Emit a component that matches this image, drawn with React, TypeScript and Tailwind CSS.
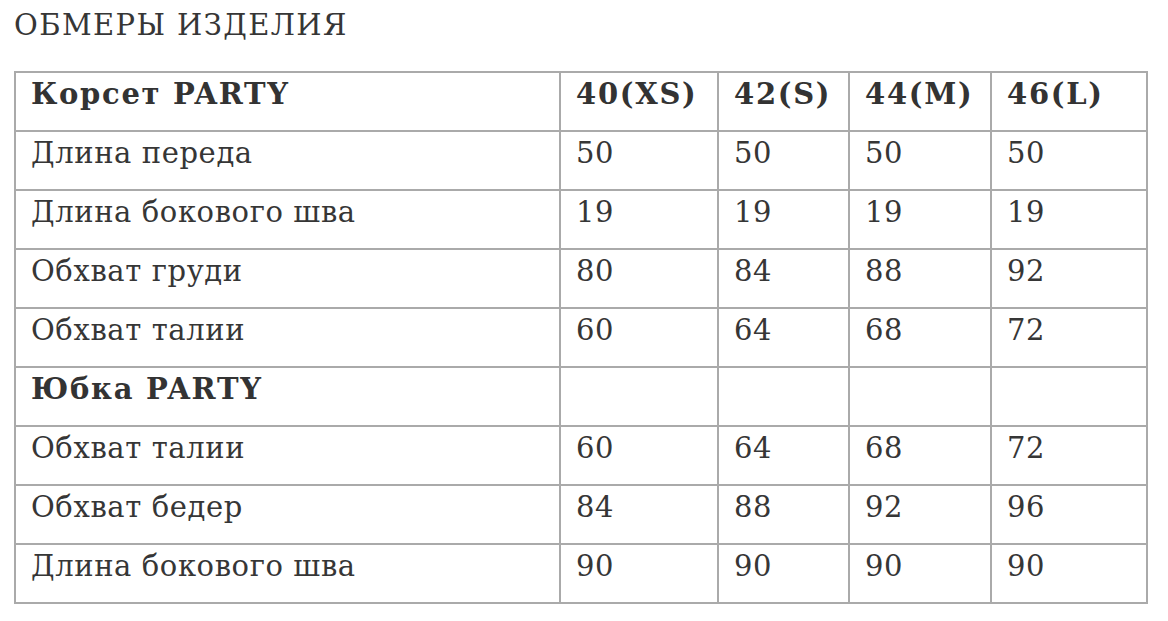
const sizes = ["40(XS)", "42(S)", "44(M)", "46(L)"];

type Row = { label: string; values: string[]; bold?: boolean };

const rows: Row[] = [
  { label: "Корсет PARTY", values: sizes, bold: true },
  { label: "Длина переда", values: ["50", "50", "50", "50"] },
  { label: "Длина бокового шва", values: ["19", "19", "19", "19"] },
  { label: "Обхват груди", values: ["80", "84", "88", "92"] },
  { label: "Обхват талии", values: ["60", "64", "68", "72"] },
  { label: "Юбка PARTY", values: ["", "", "", ""], bold: true },
  { label: "Обхват талии", values: ["60", "64", "68", "72"] },
  { label: "Обхват бедер", values: ["84", "88", "92", "96"] },
  { label: "Длина бокового шва", values: ["90", "90", "90", "90"] },
];

const colWidths = ["w-[545px]", "w-[158px]", "w-[131px]", "w-[142px]", "w-[156px]"];

export default function App() {
  return (
    <div className="min-h-[621px] bg-white pl-[14px] pt-[6px] text-[#363636] font-['DejaVu_Serif',serif]">
      <h1 className="text-[29px] leading-[38px] tracking-[1.4px]">ОБМЕРЫ ИЗДЕЛИЯ</h1>
      <table className="mt-[27px] w-[1133px] table-fixed border-collapse border-2 border-[#aaaaaa]">
        <colgroup>
          {colWidths.map((w, i) => (
            <col key={i} className={w} />
          ))}
        </colgroup>
        <tbody>
          {rows.map((r, i) => (
            <tr key={i} className="h-[59px]">
              {[r.label, ...r.values].map((v, j) => (
                <td
                  key={j}
                  className={`border-2 border-[#aaaaaa] px-[15px] pt-0 pb-[15px] align-top text-[29px] leading-[42px] ${
                    r.bold ? "font-bold tracking-[1.7px] text-[#333333]" : "tracking-[0.6px]"
                  }`}
                >
                  {v}
                </td>
              ))}
            </tr>
          ))}
        </tbody>
      </table>
    </div>
  );
}
